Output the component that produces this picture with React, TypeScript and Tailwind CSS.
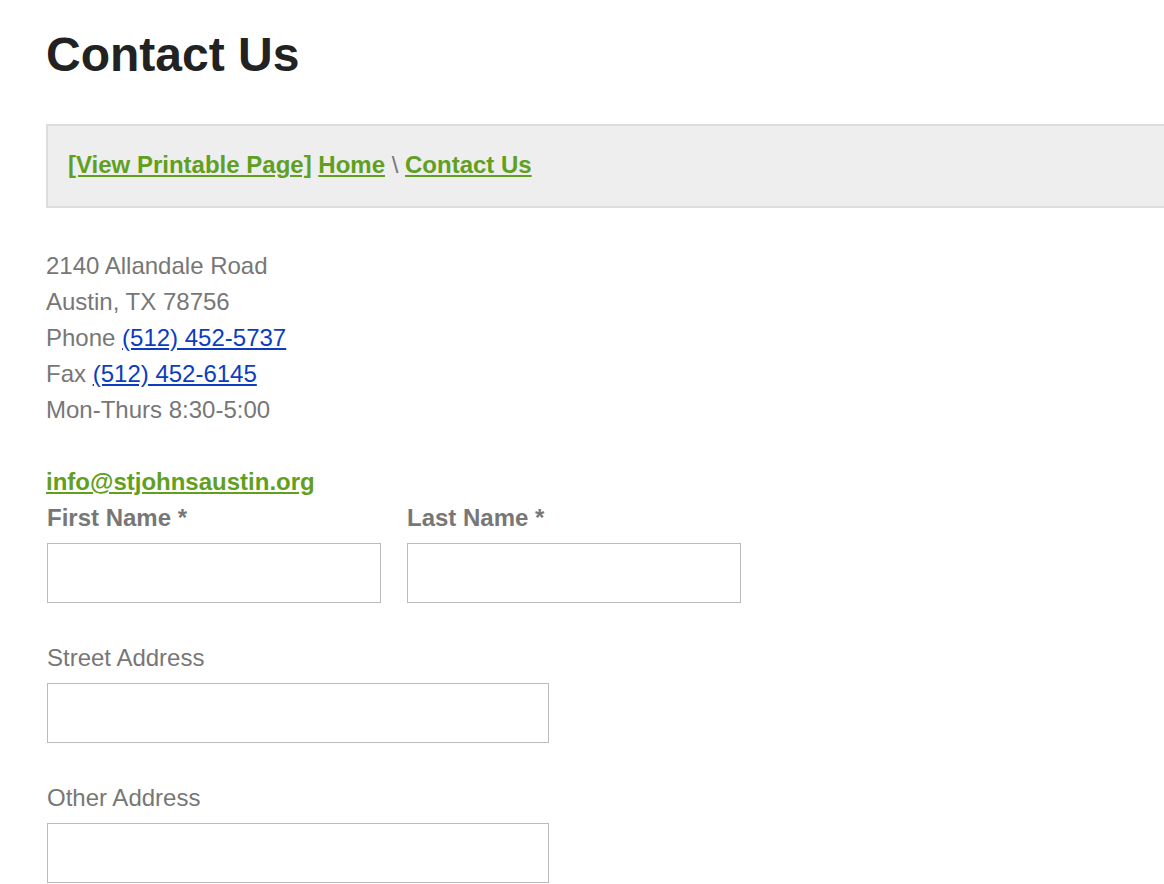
const font = { fontFamily: '"Liberation Sans", Arial, Helvetica, sans-serif' };

const Field = ({ label, bold, width }: { label: string; bold?: boolean; width: string }) => (
  <div className="flex flex-col">
    <label className={`text-[24px] leading-[36px] text-[#777] ${bold ? "font-bold" : ""}`}>
      {label}
    </label>
    <input
      type="text"
      className={`mt-[7px] h-[60px] ${width} border border-[#bbb] bg-white outline-none`}
    />
  </div>
);

export default function App() {
  return (
    <div className="min-h-screen bg-white pl-[46px] overflow-hidden" style={font}>
      {/* Page title */}
      <h1 className="mt-[27px] text-[48px] leading-[56px] font-bold text-[#222]">Contact Us</h1>

      {/* Breadcrumb bar */}
      <div className="mt-[41px] border-2 border-r-0 border-[#ddd] bg-[#eee] pt-[21px] pb-[23px] pl-[20px]">
        <p className="text-[24px] leading-[36px] font-bold text-[#777]">
          <a href="#" className="text-[#60a01e] underline">[View Printable Page]</a>{" "}
          <a href="#" className="text-[#60a01e] underline">Home</a>{" "}
          <span className="font-normal">\</span>{" "}
          <a href="#" className="text-[#60a01e] underline">Contact Us</a>
        </p>
      </div>

      {/* Address */}
      <div className="mt-[40px] text-[24px] leading-[36px] text-[#777]">
        <p>2140 Allandale Road</p>
        <p>Austin, TX 78756</p>
        <p>
          Phone <a href="#" className="text-[#0b3cc1] underline">(512) 452-5737</a>
        </p>
        <p>
          Fax <a href="#" className="text-[#0b3cc1] underline">(512) 452-6145</a>
        </p>
        <p>Mon-Thurs 8:30-5:00</p>
      </div>

      <p className="mt-[36px] text-[24px] leading-[36px] font-bold">
        <a href="#" className="text-[#60a01e] underline">info@stjohnsaustin.org</a>
      </p>

      {/* Form */}
      <form className="ml-px flex flex-col">
        <div className="flex gap-[26px]">
          <Field label="First Name *" bold width="w-[334px]" />
          <Field label="Last Name *" bold width="w-[334px]" />
        </div>
        <div className="mt-[37px]">
          <Field label="Street Address" width="w-[502px]" />
        </div>
        <div className="mt-[37px]">
          <Field label="Other Address" width="w-[502px]" />
        </div>
      </form>
    </div>
  );
}
